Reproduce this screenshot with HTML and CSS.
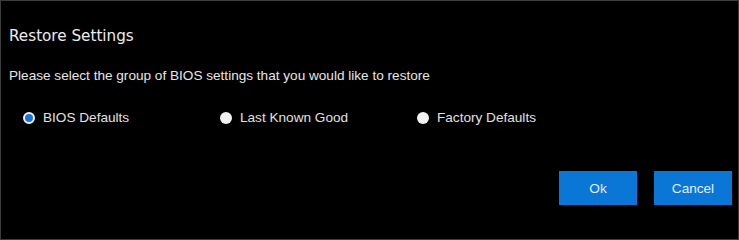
FILE: index.html
```html
<!DOCTYPE html>
<html>
<head>
<meta charset="utf-8">
<link rel="stylesheet" href="styles.css">
</head>
<body>
<div class="dialog">
  <h1 class="title">Restore Settings</h1>
  <p class="desc">Please select the group of BIOS settings that you would like to restore</p>
  <div class="options">
    <label class="option"><span class="radio checked"></span>BIOS Defaults</label>
    <label class="option"><span class="radio"></span>Last Known Good</label>
    <label class="option"><span class="radio"></span>Factory Defaults</label>
  </div>
  <div class="actions">
    <button class="btn">Ok</button>
    <button class="btn">Cancel</button>
  </div>
</div>
</body>
</html>
```

FILE: styles.css
```css
html, body {
  margin: 0;
  padding: 0;
  background: #000;
}
.dialog {
  box-sizing: border-box;
  width: 739px;
  height: 240px;
  border: 1px solid #3c3c3c;
  background: #000;
  color: #e6e6e6;
  font-family: "Liberation Sans", Arial, sans-serif;
  padding: 0 0 0 8px;
  display: flex;
  flex-direction: column;
}
.title {
  margin: 26px 0 0 0;
  font-family: "DejaVu Sans", "Liberation Sans", sans-serif;
  font-size: 15.2px;
  font-weight: normal;
  line-height: 18px;
  color: #ececec;
}
.desc {
  margin: 23px 0 0 0;
  font-size: 13.6px;
  line-height: 16px;
  color: #e6e6e6;
}
.options {
  display: flex;
  margin: 26px 0 0 14px;
}
.option {
  display: flex;
  align-items: center;
  width: 197px;
  font-size: 13.6px;
  line-height: 16px;
  color: #e0e0e0;
}
.radio {
  box-sizing: border-box;
  width: 12px;
  height: 12px;
  border-radius: 50%;
  background: #f2f2f2;
  margin-right: 8px;
  flex: none;
}
.radio.checked {
  background: #1a73d6;
  border: 2.5px solid #f2f2f2;
}
.actions {
  display: flex;
  justify-content: flex-end;
  gap: 17px;
  margin: 45px 6px 0 0;
}
.btn {
  width: 78px;
  height: 34px;
  border: none;
  background: #0a76d6;
  color: #e8eef8;
  font-family: "Liberation Sans", Arial, sans-serif;
  font-size: 13.6px;
  padding: 0;
}
```
